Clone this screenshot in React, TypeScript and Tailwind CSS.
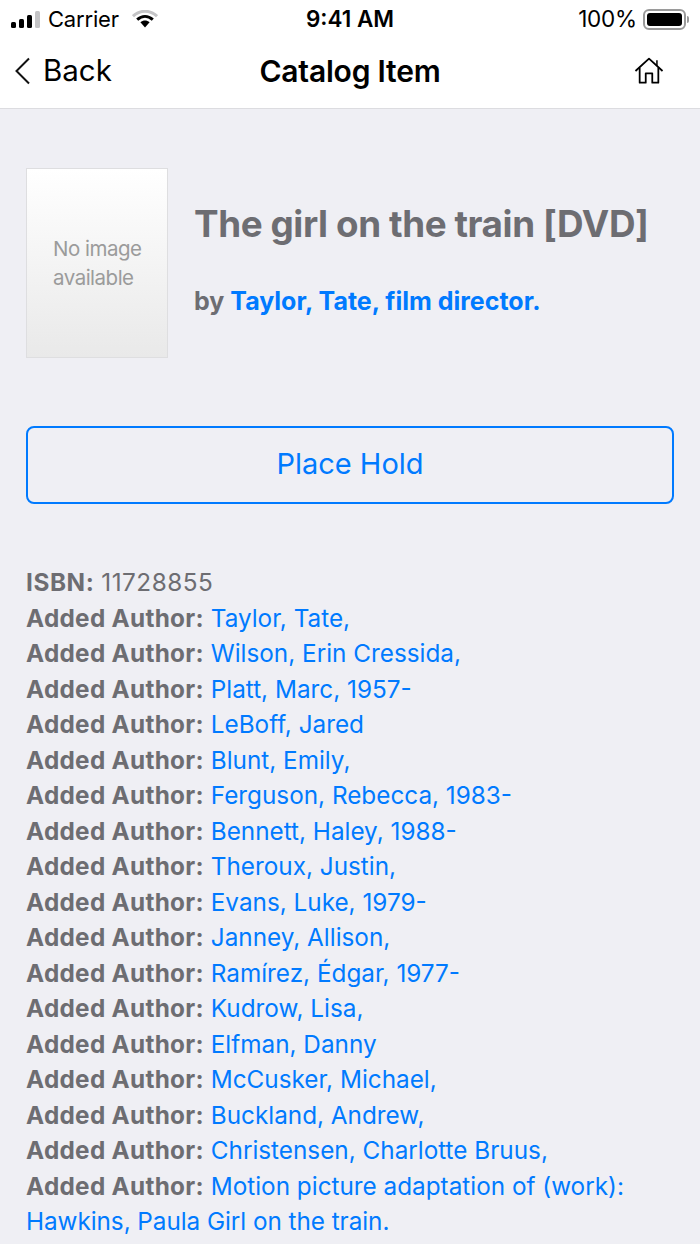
import React from "react";

const authors = [
  "Taylor, Tate,",
  "Wilson, Erin Cressida,",
  "Platt, Marc, 1957-",
  "LeBoff, Jared",
  "Blunt, Emily,",
  "Ferguson, Rebecca, 1983-",
  "Bennett, Haley, 1988-",
  "Theroux, Justin,",
  "Evans, Luke, 1979-",
  "Janney, Allison,",
  "Ramírez, Édgar, 1977-",
  "Kudrow, Lisa,",
  "Elfman, Danny",
  "McCusker, Michael,",
  "Buckland, Andrew,",
  "Christensen, Charlotte Bruus,",
  "Motion picture adaptation of (work):",
];

const StatusBar: React.FC = () => (
  <div className="flex h-[38px] items-center justify-between pl-[11px] pr-[11px] leading-none text-black">
    <div className="flex w-[200px] items-center">
      <div className="flex items-end gap-[3px]">
        <span className="h-[6px] w-[5px] rounded-[1.5px] bg-black" />
        <span className="h-[9px] w-[5px] rounded-[1.5px] bg-black" />
        <span className="h-[13px] w-[5px] rounded-[1.5px] bg-black" />
        <span className="h-[17px] w-[5px] rounded-[1.5px] bg-[#c4c4c6]" />
      </div>
      <span className="ml-[8px] text-[22px] tracking-[-0.2px]">Carrier</span>
      <svg className="ml-[13px]" width="26" height="18" viewBox="0 0 26 18">
        <path d="M1 6.2C8 -0.4 18 -0.4 25 6.2" fill="none" stroke="#c4c4c6" strokeWidth="3" />
        <path d="M5.2 9.6C10 5.4 16 5.4 20.8 9.6" fill="none" stroke="#000" strokeWidth="3" />
        <path d="M8.4 12.2C11.2 9.8 14.8 9.8 17.6 12.2L13 17.4Z" fill="#000" />
      </svg>
    </div>
    <span className="text-[22.5px] font-semibold">9:41 AM</span>
    <div className="flex w-[200px] items-center justify-end">
      <span className="text-[22.5px] tracking-[-0.2px]">100%</span>
      <div className="ml-[6px] flex h-[21px] w-[43px] items-center rounded-[6px] border-2 border-[#9a9a9a] p-[2px]">
        <div className="h-full w-full rounded-[3px] bg-black" />
      </div>
      <span className="ml-[1px] h-[7px] w-[2px] rounded-r-[2px] bg-[#9a9a9a]" />
    </div>
  </div>
);

const NavBar: React.FC = () => (
  <div className="flex h-[71px] items-center justify-between border-b border-[#dcdce0] pb-[4px] pl-[14px] pr-[36px] text-black">
    <div className="flex w-[140px] items-center">
      <svg width="17" height="28" viewBox="0 0 17 28" fill="none" stroke="#111" strokeWidth="2">
        <path d="M15 1.5L2.5 14L15 26.5" />
      </svg>
      <span className="ml-[12px] text-[29.5px] leading-none">Back</span>
    </div>
    <h1 className="text-[30px] font-semibold leading-none tracking-[-0.2px]">Catalog Item</h1>
    <div className="flex w-[118px] justify-end">
      <svg width="30" height="28" viewBox="0 0 32 30" fill="none" stroke="#000" strokeWidth="1.9" strokeLinejoin="round">
        <path d="M1.5 15L16 1.8L30.5 15" />
        <path d="M24.5 3.5V9.5" strokeWidth="1.6" />
        <path d="M6 11.5V27.5H12.5V17.5H19.5V27.5H26V11.5" />
      </svg>
    </div>
  </div>
);

const Thumb: React.FC = () => (
  <div className="flex h-[190px] w-[142px] shrink-0 flex-col justify-center border border-[#dedee0] bg-gradient-to-b from-white to-[#e9e9e9] pl-[26px] text-[20.5px] leading-[29px] tracking-[-0.5px] text-[#9b9b9b]">
    <span>No image</span>
    <span>available</span>
  </div>
);

export default function App() {
  return (
    <div className="min-h-[1244px] overflow-hidden bg-[#efeff4] font-['Inter','Noto_Sans',sans-serif]">
      <div className="bg-white">
        <StatusBar />
        <NavBar />
      </div>
      <div className="px-[26px] pt-[59px]">
        <div className="flex items-center gap-[26px]">
          <Thumb />
          <div className="pb-[8px]">
            <h2 className="whitespace-nowrap text-[36.8px] font-bold leading-[42px] tracking-[-0.4px] text-[#6d6d72]">
              The girl on the train [DVD]
            </h2>
            <p className="mt-[41px] text-[25px] font-bold leading-[30px] text-[#6d6d72]">
              by <span className="text-[#007aff]">Taylor, Tate, film director.</span>
            </p>
          </div>
        </div>
        <button className="mt-[68px] block h-[78px] w-[648px] rounded-[8px] border-2 border-[#007aff] pb-[2px] text-[29px] text-[#007aff]">
          Place Hold
        </button>
        <div className="mt-[61px] text-[24.3px] leading-[35.5px] text-[#6d6d72]">
          <div>
            <span className="font-bold tracking-[0.6px]">ISBN:</span>{" "}
            <span className="tracking-[0.5px]">11728855</span>
          </div>
          {authors.map((author) => (
            <div key={author}>
              <span className="font-bold tracking-[0.3px]">Added Author:</span>{" "}
              <span className="text-[#007aff]">{author}</span>
            </div>
          ))}
          <div className="tracking-[-0.05px] text-[#007aff]">Hawkins, Paula Girl on the train.</div>
        </div>
      </div>
    </div>
  );
}
